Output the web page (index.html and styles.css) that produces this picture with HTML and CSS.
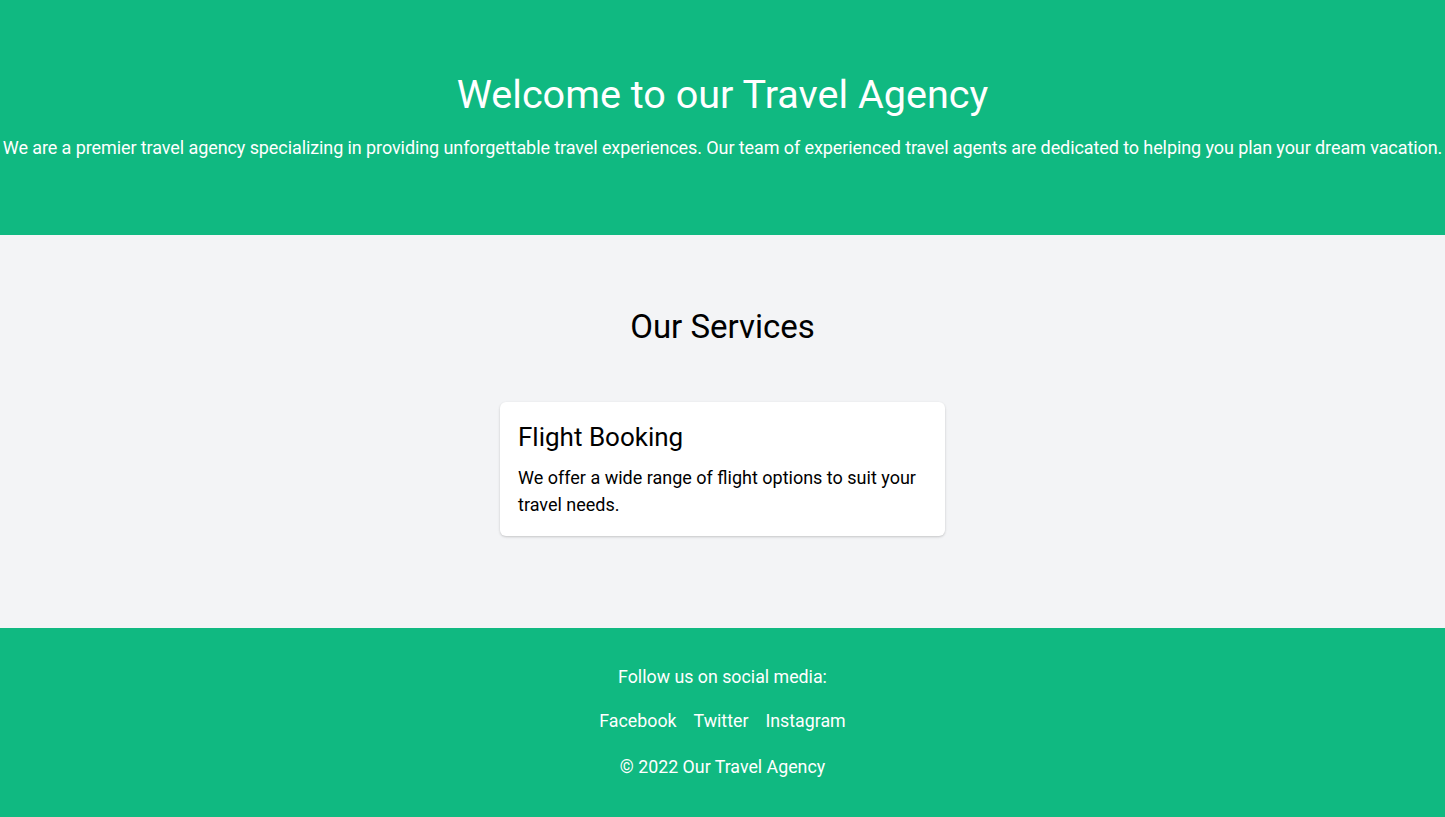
FILE: index.html
```html
<!DOCTYPE html>
<html lang="en">
<head>
<meta charset="utf-8">
<title>Travel Agency</title>
<link rel="stylesheet" href="styles.css">
</head>
<body>
<header class="hero">
  <h1 class="hero-title">Welcome to our Travel Agency</h1>
  <p class="hero-text">We are a premier travel agency specializing in providing unforgettable travel experiences. Our team of experienced travel agents are dedicated to helping you plan your dream vacation.</p>
</header>
<main class="services">
  <h2 class="services-title">Our Services</h2>
  <div class="cards">
    <div class="card">
      <h3 class="card-title">Flight Booking</h3>
      <p class="card-text">We offer a wide range of flight options to suit your travel needs.</p>
    </div>
  </div>
</main>
<footer class="footer">
  <p class="footer-line">Follow us on social media:</p>
  <nav class="social">
    <a href="#" class="social-link">Facebook</a>
    <a href="#" class="social-link">Twitter</a>
    <a href="#" class="social-link">Instagram</a>
  </nav>
  <p class="footer-copy">© 2022 Our Travel Agency</p>
</footer>
</body>
</html>
```

FILE: styles.css
```css
* { box-sizing: border-box; }
html, body { margin: 0; padding: 0; }
body {
  font-family: Roboto, "Liberation Sans", Arial, sans-serif;
  background: #f3f4f6;
  color: #000;
}
h1, h2, h3, p { margin: 0; font-weight: 400; }

.hero {
  background: #10b981;
  color: #fff;
  text-align: center;
  padding: 70px 0 73px;
}
.hero-title {
  font-size: 39.6px;
  line-height: 50px;
  margin-bottom: 14px;
}
.hero-text {
  font-size: 18px;
  line-height: 28px;
  letter-spacing: -0.09px;
  white-space: nowrap;
}

.services {
  padding: 74px 0 92px;
  text-align: center;
}
.services-title {
  font-size: 33px;
  line-height: 36px;
  margin-bottom: 57px;
}
.cards {
  display: flex;
  justify-content: center;
}
.card {
  width: 445px;
  background: #fff;
  border-radius: 6px;
  box-shadow: 0 1px 3px rgba(0,0,0,0.12), 0 1px 2px rgba(0,0,0,0.08);
  padding: 19px 18px 18px;
  text-align: left;
}
.card-title {
  font-size: 26px;
  line-height: 32px;
  margin-bottom: 11px;
}
.card-text {
  font-size: 18px;
  line-height: 27px;
}

.footer {
  background: #10b981;
  color: #fff;
  text-align: center;
  padding: 35px 0 36px;
  font-size: 17.8px;
  line-height: 28px;
}
.social {
  display: flex;
  justify-content: center;
  gap: 17px;
  margin: 16px 0 18px;
}
.social-link {
  color: #fff;
  text-decoration: none;
}
```
